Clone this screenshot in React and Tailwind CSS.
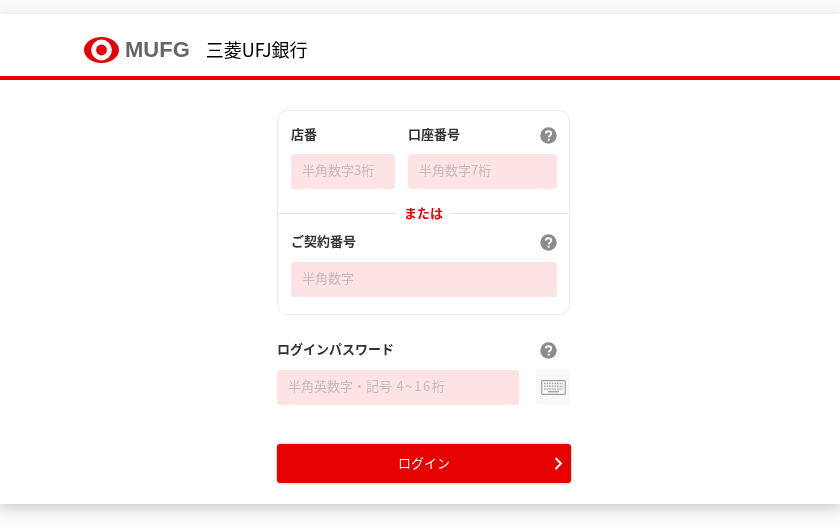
const jp = { fontFamily: '"Noto Sans CJK JP", "Liberation Sans", sans-serif' };

function Help() {
  return (
    <svg width="17" height="17" viewBox="0 0 17 17" className="shrink-0 translate-y-[1px]">
      <circle cx="8.5" cy="8.5" r="8.2" fill="#8c8c8c" />
      <path d="M5.9 6.6c0-1.5 1.1-2.3 2.6-2.3s2.7.8 2.7 2.2c0 1.9-2.4 1.9-2.4 3.7" fill="none" stroke="#fff" strokeWidth="1.9" />
      <circle cx="8.7" cy="12.7" r="1.15" fill="#fff" />
    </svg>
  );
}

function Field({ children, className = "" }) {
  return (
    <div className={"h-[35px] flex items-center rounded-[3px] bg-[#fde3e4] text-[13px] text-[#c4bbbb] px-[11px] pb-[3px] whitespace-pre " + className}>
      {children}
    </div>
  );
}

function Label({ children, className = "" }) {
  return <div className={"text-[13px] font-bold text-[#333] leading-[17px] whitespace-nowrap -translate-y-[1px] " + className}>{children}</div>;
}

export default function App() {
  return (
    <div className="w-[840px] h-[526px] overflow-hidden bg-[#fbfbfb] pt-[14px] blur-[0.4px]" style={jp}>
      <div className="h-[490px] bg-white shadow-[0_4px_14px_rgba(0,0,0,0.2)]">
        <header className="h-[66px] border-b-[4px] border-[#e60000] flex items-center pl-[84px] pt-[10px]">
          <svg width="35" height="26" viewBox="0 0 35 26" className="shrink-0">
            <path
              fillRule="evenodd"
              d="M17.5 0C27 0 35 5.8 35 13s-8 13-17.5 13S0 20.2 0 13 8 0 17.5 0ZM17.5 2.6a10.4 10.4 0 1 0 0 20.8 10.4 10.4 0 0 0 0-20.8Z"
              fill="#e60000"
            />
            <circle cx="17.5" cy="13" r="5.4" fill="#e60000" />
          </svg>
          <span className="ml-[6px] text-[22px] font-bold text-[#666] leading-none" style={{ fontFamily: '"Liberation Sans", sans-serif' }}>MUFG</span>
          <span className="ml-[16px] text-[18px] text-black leading-none whitespace-nowrap pb-[2px]">三菱UFJ銀行</span>
        </header>

        <main className="pl-[7px] flex justify-center pt-[30px]">
          <div className="w-[293px]">
            <section className="h-[205px] border border-[#ececec] rounded-[10px] flex flex-col">
              <div className="flex pl-[13px] pr-[13px] pt-[15px] gap-[13px]">
                <div className="w-[104px]">
                  <Label className="mb-[11px]">店番</Label>
                  <Field className="w-[104px]">半角数字3桁</Field>
                </div>
                <div className="w-[149px]">
                  <div className="flex items-center justify-between mb-[11px] h-[17px]">
                    <Label>口座番号</Label>
                    <Help />
                  </div>
                  <Field className="w-[149px]">半角数字7桁</Field>
                </div>
              </div>
              <div className="flex items-center mt-[24px] h-px bg-[#e8e8e8] justify-center">
                <span className="bg-white px-[7px] pb-[2px] text-[13px] font-bold text-[#f00000] leading-none">または</span>
              </div>
              <div className="pl-[13px] pr-[12px] pt-[19px]">
                <div className="flex items-center justify-between mb-[12px] h-[17px]">
                  <Label>ご契約番号</Label>
                  <Help />
                </div>
                <Field>半角数字</Field>
              </div>
            </section>

            <div className="mt-[26px]">
              <div className="flex items-center justify-between h-[17px] mb-[12px] pr-[13px]">
                <Label>ログインパスワード</Label>
                <Help />
              </div>
              <div className="flex justify-between">
                <Field className="w-[242px]">半角英数字・記号<span className="tracking-[1.6px]"> 4~16</span>桁</Field>
                <div className="w-[34px] h-[35px] bg-[#f8f8f8] rounded-[2px] flex items-center justify-center">
                  <svg width="25" height="15" viewBox="0 0 25 15" fill="none">
                    <rect x="0.7" y="0.7" width="23.6" height="13.6" rx="1" stroke="#a0a0a0" strokeWidth="1.2" />
                    <path d="M3 3.5h19M3 6.2h19M3 8.9h19" stroke="#a8a8a8" strokeWidth="1.5" strokeDasharray="1.6 1" />
                    <path d="M7 11.6h11" stroke="#a8a8a8" strokeWidth="1.5" />
                  </svg>
                </div>
              </div>
            </div>

            <button className="relative mt-[39px] w-[294px] h-[39px] rounded-[3px] bg-[#e60000] text-white text-[13px] pb-[2px] flex items-center justify-center shadow-[0_0_3px_rgba(0,0,0,0.3)]">
              ログイン
              <svg width="9" height="13" viewBox="0 0 9 13" fill="none" className="absolute right-[8px] top-[13px]">
                <path d="M1.5 1l5.5 5.5L1.5 12" stroke="#fff" strokeWidth="2" />
              </svg>
            </button>
          </div>
        </main>
      </div>
    </div>
  );
}
